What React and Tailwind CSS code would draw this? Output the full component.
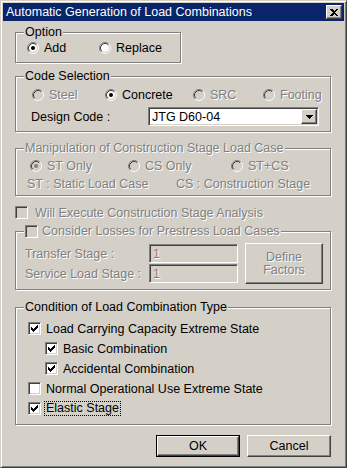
import React from 'react';

const FACE = '#d4d0c8';

const sunken =
  'border border-t-[#808080] border-l-[#808080] border-r-white border-b-white shadow-[inset_1px_1px_0_#404040,inset_-1px_-1px_0_#d4d0c8]';
const raised =
  'border border-t-white border-l-white border-r-[#404040] border-b-[#404040] shadow-[inset_-1px_-1px_0_#808080]';
const etched = 'border border-[#808080] shadow-[inset_1px_1px_0_#fff,1px_1px_0_#fff]';
const dim = 'text-[#808080] [text-shadow:1px_1px_0_#fff]';

const Radio = ({ checked, disabled }) => (
  <svg width="12" height="12" viewBox="0 0 12 12" className="shrink-0">
    <circle cx="6" cy="6" r="4" fill={disabled ? FACE : '#fff'} />
    <path d="M2.11 9.89 A5.5 5.5 0 0 1 9.89 2.11" stroke="#808080" fill="none" />
    <path d="M9.89 2.11 A5.5 5.5 0 0 1 2.11 9.89" stroke="#fff" fill="none" />
    <path d="M2.82 9.18 A4.5 4.5 0 0 1 9.18 2.82" stroke="#404040" fill="none" />
    <path d="M9.18 2.82 A4.5 4.5 0 0 1 2.82 9.18" stroke={FACE} fill="none" />
    {checked && <circle cx="6" cy="6" r="2" fill={disabled ? '#808080' : '#000'} />}
  </svg>
);

const tick = [
  [6], [5, 6], [0, 4, 5, 6], [0, 1, 3, 4, 5], [0, 1, 2, 3, 4], [1, 2, 3], [2],
];

const Check = ({ checked, disabled }) => (
  <span className={`${sunken} w-[13px] h-[13px] shrink-0 relative ${disabled ? 'bg-[#d4d0c8]' : 'bg-white'}`}>
    {checked && (
      <svg width="7" height="7" className="absolute left-[2px] top-[2px]" shapeRendering="crispEdges">
        {tick.map((xs, y) => xs.map((x) => <rect key={`${x}-${y}`} x={x} y={y} width="1" height="1" fill="#000" />))}
      </svg>
    )}
  </span>
);

const Group = ({ legend, className, children }) => (
  <div className={`relative ${etched} ${className}`}>
    <div className="absolute left-[8px] -top-[8px] bg-[#d4d0c8] px-[1px] flex items-center gap-[4px] h-[14px]">
      {legend}
    </div>
    {children}
  </div>
);

const Opt = ({ label, checked, disabled, w }) => (
  <div className={`flex items-center gap-[5px] ${w}`}>
    <Radio checked={checked} disabled={disabled} />
    <span className={disabled ? dim : ''}>{label}</span>
  </div>
);

const Box = ({ label, checked, focus, indent }) => (
  <div className={`flex items-center gap-[5px] h-[13px] ${indent ? 'pl-[17px]' : ''}`}>
    <Check checked={checked} />
    <span className={focus ? 'outline-1 outline-dotted outline-black px-[1px] -ml-[1px] leading-[13px]' : ''}>{label}</span>
  </div>
);

export default function App() {
  return (
    <div
      className="w-[347px] h-[468px] bg-[#d4d0c8] border border-t-[#d4d0c8] border-l-[#d4d0c8] border-r-[#404040] border-b-[#404040] text-[12.5px] leading-[14px] text-black"
      style={{ fontFamily: '"Liberation Sans", Arial, sans-serif' }}
    >
      <div className="h-full shadow-[inset_1px_1px_0_#fff,inset_-1px_-1px_0_#808080] p-[2px] flex flex-col">
        <div className="h-[18px] bg-[#0a246a] flex items-center justify-between pl-[3px] pr-[2px]">
          <span className="text-white text-[12.5px]">Automatic Generation of Load Combinations</span>
          <span className={`${raised} bg-[#d4d0c8] w-[16px] h-[14px] flex items-center justify-center`}>
            <svg width="8" height="7" viewBox="0 0 8 7" shapeRendering="crispEdges">
              <path d="M0 0h2l2 2 2-2h2L5 3.5 8 7H6L4 5 2 7H0l3-3.5z" fill="#000" />
            </svg>
          </span>
        </div>

        <div className="pl-[12px] pr-[13px] flex flex-col">
          <Group legend={<span>Option</span>} className="mt-[11px] w-[166px] h-[31px]">
            <div className="h-full flex items-center pl-[11px]">
              <Opt label="Add" checked w="w-[72px]" />
              <Opt label="Replace" />
            </div>
          </Group>

          <Group legend={<span>Code Selection</span>} className="mt-[13px] h-[56px]">
            <div className="pt-[11px] pl-[16px] flex items-center h-[25px]">
              <Opt label="Steel" disabled w="w-[73px]" />
              <Opt label="Concrete" checked w="w-[88px]" />
              <Opt label="SRC" disabled w="w-[70px]" />
              <Opt label="Footing" disabled />
            </div>
            <div className="mt-[5px] flex items-center pl-[15px]">
              <span className="w-[117px]">Design Code :</span>
              <div className={`${sunken} bg-white w-[171px] h-[19px] flex items-center justify-between pl-[3px] pr-[1px]`}>
                <span>JTG D60-04</span>
                <span className={`${raised} bg-[#d4d0c8] w-[16px] h-[15px] flex items-center justify-center`}>
                  <svg width="7" height="4" viewBox="0 0 7 4" shapeRendering="crispEdges">
                    <path d="M0 0h7L3.5 4z" fill="#000" />
                  </svg>
                </span>
              </div>
            </div>
          </Group>

          <Group legend={<span className={dim}>Manipulation of Construction Stage Load Case</span>} className="mt-[16px] h-[48px]">
            <div className="pt-[10px] pl-[14px] flex items-center h-[24px]">
              <Opt label="ST Only" checked disabled w="w-[98px]" />
              <Opt label="CS Only" disabled w="w-[103px]" />
              <Opt label="ST+CS" disabled />
            </div>
            <div className={`mt-[4px] flex pl-[11px] ${dim}`}>
              <span className="w-[149px]">ST : Static Load Case</span>
              <span>CS : Construction Stage</span>
            </div>
          </Group>

          <div className="mt-[10px] flex items-center gap-[7px] h-[13px]">
            <Check disabled />
            <span className={dim}>Will Execute Construction Stage Analysis</span>
          </div>

          <Group
            legend={
              <>
                <Check disabled />
                <span className={dim}>Consider Losses for Prestress Load Cases</span>
              </>
            }
            className="mt-[12px] h-[59px]"
          >
            <div className="pt-[12px] pl-[9px] flex">
              <div className="flex flex-col gap-[1px]">
                {['Transfer Stage :', 'Service Load Stage :'].map((l) => (
                  <div key={l} className="flex items-center">
                    <span className={`w-[124px] ${dim}`}>{l}</span>
                    <div className={`${sunken} bg-[#d4d0c8] w-[89px] h-[19px] flex items-center pl-[3px] ${dim}`}>1</div>
                  </div>
                ))}
              </div>
              <div className={`${raised} ml-[7px] -mt-[1px] w-[78px] h-[41px] flex flex-col items-center justify-center leading-[13px] ${dim}`}>
                <span>Define</span>
                <span>Factors</span>
              </div>
            </div>
          </Group>

          <Group legend={<span>Condition of Load Combination Type</span>} className="mt-[17px] h-[118px]">
            <div className="pt-[14px] pl-[12px] flex flex-col gap-[7px]">
              <Box label="Load Carrying Capacity Extreme State" checked />
              <Box label="Basic Combination" checked indent />
              <Box label="Accidental Combination" checked indent />
              <Box label="Normal Operational Use Extreme State" />
              <Box label="Elastic Stage" checked focus />
            </div>
          </Group>

          <div className="mt-[10px] flex justify-end gap-[7px]">
            <div className="border border-black">
              <div className={`${raised} w-[82px] h-[20px] flex items-center justify-center`}>OK</div>
            </div>
            <div className={`${raised} w-[84px] h-[22px] flex items-center justify-center`}>Cancel</div>
          </div>
        </div>
      </div>
    </div>
  );
}
